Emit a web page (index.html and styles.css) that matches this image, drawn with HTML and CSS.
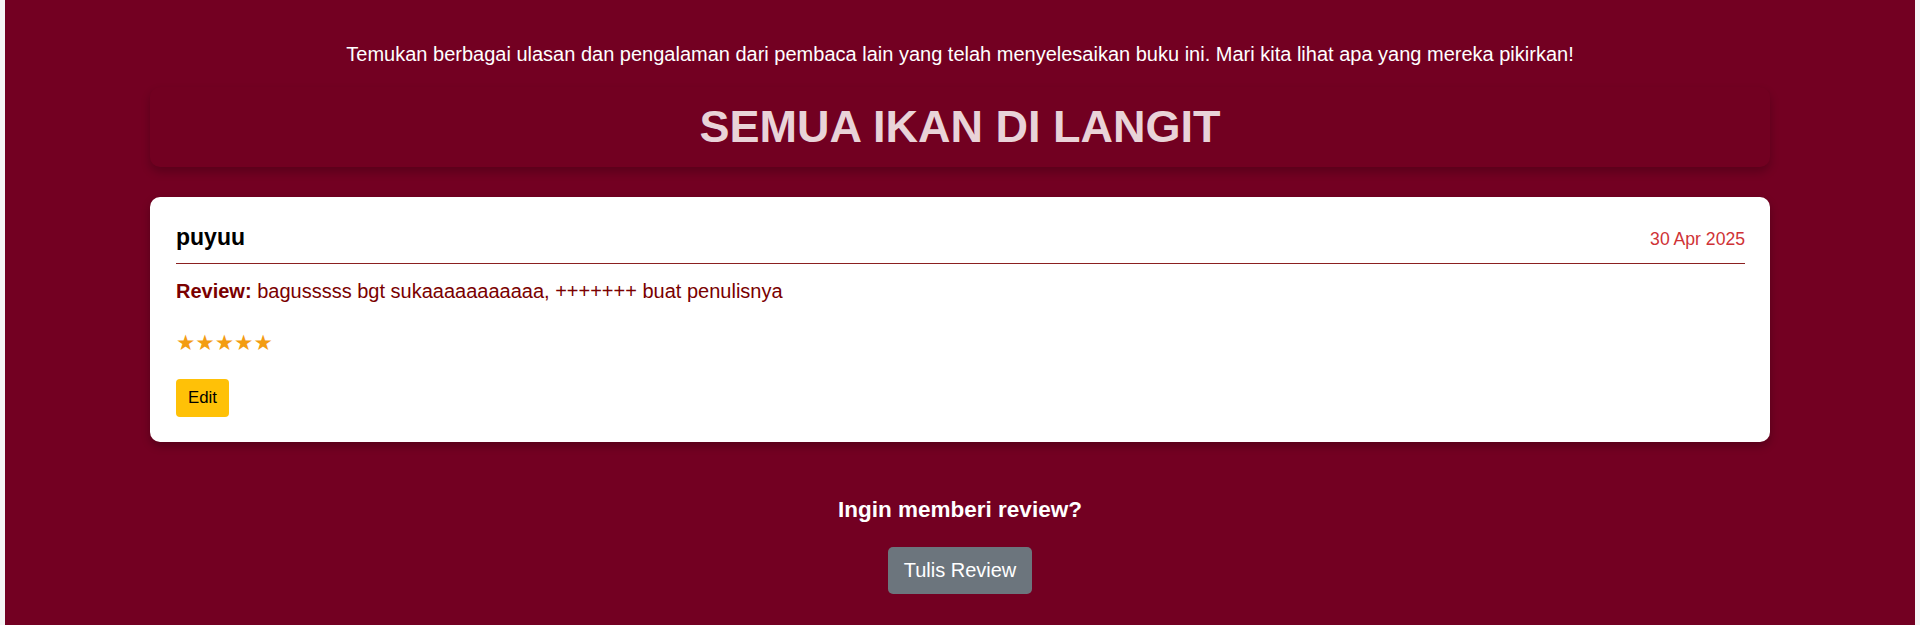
FILE: index.html
```html
<!DOCTYPE html>
<html lang="id">
<head>
<meta charset="utf-8">
<title>Review - Semua Ikan di Langit</title>
<link rel="stylesheet" href="styles.css">
</head>
<body>
<main class="page">
  <p class="intro">Temukan berbagai ulasan dan pengalaman dari pembaca lain yang telah menyelesaikan buku ini. Mari kita lihat apa yang mereka pikirkan!</p>
  <div class="wrap">
    <header class="title-box">
      <h1 class="title">SEMUA IKAN DI LANGIT</h1>
    </header>
    <article class="card">
      <div class="card-head">
        <span class="user">puyuu</span>
        <span class="date">30 Apr 2025</span>
      </div>
      <p class="review"><strong>Review:</strong> bagusssss bgt sukaaaaaaaaaaa, +++++++ buat penulisnya</p>
      <div class="stars">★★★★★</div>
      <button class="btn-edit" type="button">Edit</button>
    </article>
  </div>
  <section class="cta">
    <h3 class="cta-title">Ingin memberi review?</h3>
    <button class="btn-write" type="button">Tulis Review</button>
  </section>
</main>
</body>
</html>
```

FILE: styles.css
```css
* { box-sizing: border-box; }
html, body { margin: 0; padding: 0; }
body {
  background: #f5f5f5;
  font-family: "Liberation Sans", Arial, sans-serif;
}
.page {
  margin: 0 5px;
  min-height: 625px;
  background: #730022;
  padding-top: 43px;
  padding-bottom: 40px;
}
.intro {
  margin: 0;
  text-align: center;
  color: #ffffff;
  font-size: 20px;
  line-height: 22px;
}
.wrap {
  width: 1620px;
  margin: 22px auto 0;
}
.title-box {
  height: 80px;
  border-radius: 10px;
  background: #720021;
  box-shadow: 0 5px 10px rgba(0, 0, 0, 0.22);
  display: flex;
  align-items: center;
  justify-content: center;
}
.title {
  margin: 0;
  font-size: 45px;
  line-height: 52px;
  font-weight: bold;
  color: #e9d3d8;
}
.card {
  margin-top: 30px;
  background: #ffffff;
  border-radius: 10px;
  padding: 28px 25px 25px 26px;
  box-shadow: 0 4px 8px rgba(0, 0, 0, 0.25);
}
.card-head {
  display: flex;
  justify-content: space-between;
  align-items: baseline;
  padding-bottom: 13px;
  border-bottom: 1px solid #8b2020;
}
.user {
  font-size: 23px;
  line-height: 25px;
  font-weight: bold;
  color: #000000;
}
.date {
  font-size: 17.6px;
  color: #cf3236;
}
.review {
  margin: 13px 0 0;
  font-size: 20px;
  line-height: 28px;
  color: #7a0000;
}
.review strong { color: #7a0000; }
.stars {
  margin-top: 25px;
  font-family: "DejaVu Sans", sans-serif;
  font-size: 21.6px;
  line-height: 26px;
  color: #f39c12;
}
.btn-edit {
  margin-top: 23px;
  display: block;
  border: 0;
  border-radius: 4px;
  background: #ffc107;
  color: #000000;
  font-family: "Liberation Sans", Arial, sans-serif;
  font-size: 16.8px;
  line-height: 20px;
  padding: 9px 12px;
}
.cta {
  margin-top: 55px;
  display: flex;
  flex-direction: column;
  align-items: center;
}
.cta-title {
  margin: 0;
  color: #ffffff;
  font-size: 22.5px;
  line-height: 26px;
  font-weight: bold;
}
.btn-write {
  margin-top: 24px;
  border: 0;
  border-radius: 5px;
  background: #6c757d;
  color: #ffffff;
  font-family: "Liberation Sans", Arial, sans-serif;
  font-size: 20px;
  line-height: 23px;
  padding: 12px 16px;
}
```
